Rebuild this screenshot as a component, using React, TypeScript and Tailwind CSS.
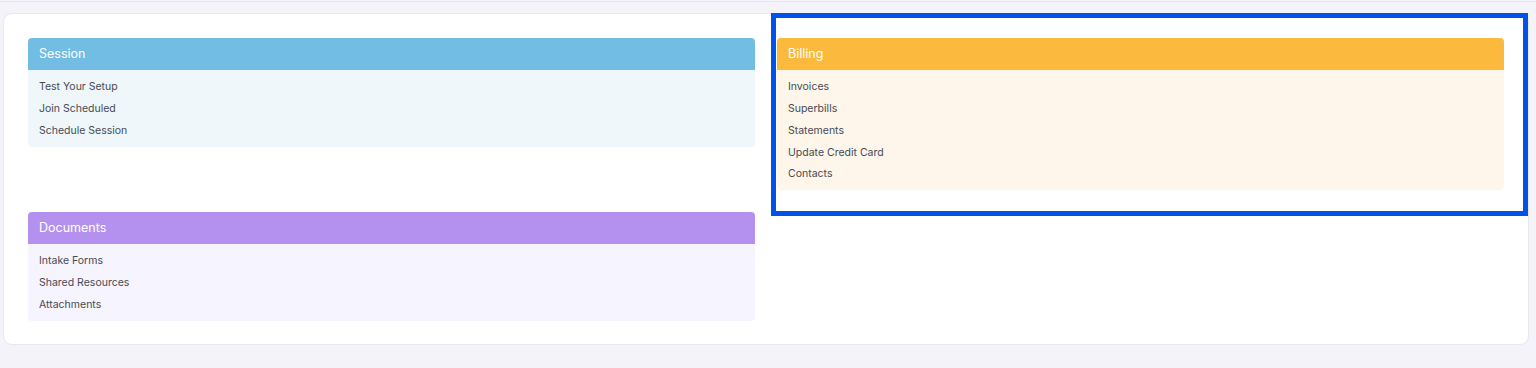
import React from "react";

type Panel = { title: string; items: string[]; head: string; body: string };

const session: Panel = {
  title: "Session",
  items: ["Test Your Setup", "Join Scheduled", "Schedule Session"],
  head: "bg-[#72bde3]",
  body: "bg-[#eff7fb]",
};
const billing: Panel = {
  title: "Billing",
  items: ["Invoices", "Superbills", "Statements", "Update Credit Card", "Contacts"],
  head: "bg-[#fbba3e]",
  body: "bg-[#fef6ea]",
};
const docs: Panel = {
  title: "Documents",
  items: ["Intake Forms", "Shared Resources", "Attachments"],
  head: "bg-[#b491ee]",
  body: "bg-[#f6f4fe]",
};

function Box({ p }: { p: Panel }) {
  return (
    <div className="rounded-[4px] overflow-hidden">
      <div className={`${p.head} h-[32px] flex items-center px-[11px] text-white text-[12.5px]`}>{p.title}</div>
      <div className={`${p.body} pt-[6.5px] pb-[5px]`}>
        {p.items.map((t) => (
          <div key={t} className="h-[21.7px] flex items-center px-[11px] text-[10.5px] text-[#484a52]">
            {t}
          </div>
        ))}
      </div>
    </div>
  );
}

export default function App() {
  return (
    <div
      className="w-[1536px] h-[368px] bg-[#f4f3f9] overflow-hidden"
      style={{ fontFamily: "Inter, 'Noto Sans', sans-serif" }}
    >
      <div className="h-[2px] border-b border-[#e6e5ee]" />
      <div className="ml-[3px] mr-[7px] mt-[11px] bg-white rounded-[9px] border border-[#e8e7ef] px-[24px] pt-[24px] pb-[23px] relative">
        <div className="grid grid-cols-2 gap-x-[22px] gap-y-[22px] items-start">
          <Box p={session} />
          <Box p={billing} />
          <Box p={docs} />
        </div>
        <div className="absolute left-[767px] top-[-1px] w-[757px] h-[203px] border-[5px] border-[#0052e8] pointer-events-none" />
      </div>
    </div>
  );
}
